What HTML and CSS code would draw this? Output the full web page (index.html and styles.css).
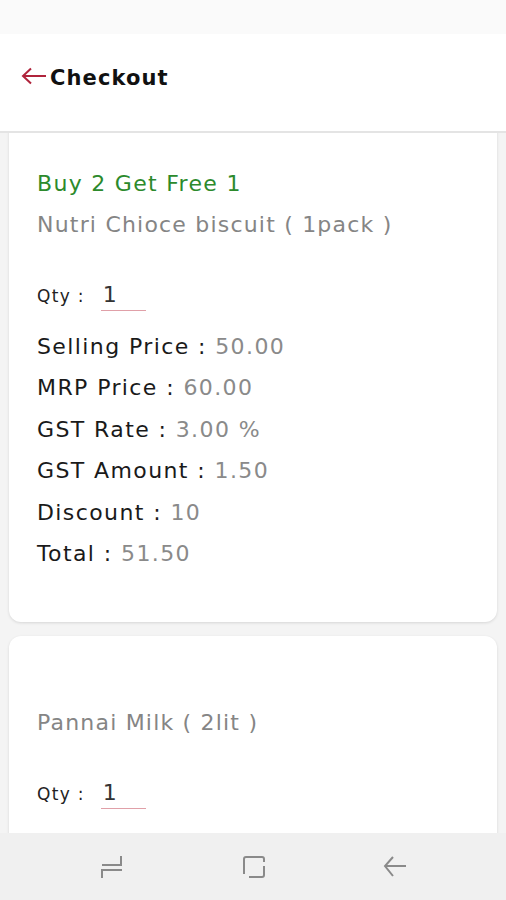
FILE: index.html
```html
<!DOCTYPE html>
<html>
<head>
<meta charset="utf-8">
<link rel="stylesheet" href="styles.css">
</head>
<body>
<div class="phone">
  <div class="statusbar"></div>
  <header class="appbar">
    <svg class="back" width="26" height="18" viewBox="0 0 26 18"><path d="M25 9H2M10 1.5L2 9l8 7.5" fill="none" stroke="#b0243c" stroke-width="2"/></svg>
    <h1 class="title">Checkout</h1>
  </header>
  <main class="content">
    <section class="card card-first">
      <p class="offer">Buy 2 Get Free 1</p>
      <p class="name">Nutri Chioce biscuit ( 1pack )</p>
      <div class="qty"><span class="qty-label">Qty :</span><span class="qty-input">1</span></div>
      <ul class="details">
        <li>Selling Price : <span class="val">50.00</span></li>
        <li>MRP Price : <span class="val">60.00</span></li>
        <li>GST Rate : <span class="val">3.00 %</span></li>
        <li>GST Amount : <span class="val">1.50</span></li>
        <li>Discount : <span class="val">10</span></li>
        <li>Total : <span class="val">51.50</span></li>
      </ul>
    </section>
    <section class="card">
      <p class="offer empty">&nbsp;</p>
      <p class="name">Pannai Milk ( 2lit )</p>
      <div class="qty"><span class="qty-label">Qty :</span><span class="qty-input">1</span></div>
    </section>
  </main>
  <nav class="navbar">
    <svg width="24" height="26" viewBox="0 0 24 26"><path d="M2 24v-8h20M21 2v9H2" fill="none" stroke="#8a8a8a" stroke-width="2"/></svg>
    <svg width="26" height="26" viewBox="0 0 26 26"><path d="M3 20V5a2 2 0 0 1 2-2h16a2 2 0 0 1 2 2v3M23 12v9a2 2 0 0 1-2 2H8" fill="none" stroke="#8a8a8a" stroke-width="2"/></svg>
    <svg width="24" height="26" viewBox="0 0 24 26"><path d="M23 12H3M10 3L2 12l8 10" fill="none" stroke="#8a8a8a" stroke-width="2"/></svg>
  </nav>
</div>
</body>
</html>
```
FILE: styles.css
```css
* { box-sizing: border-box; }
html, body { margin: 0; padding: 0; }
body { font-family: "DejaVu Sans", "Open Sans", sans-serif; background: #f4f4f4; }
.phone { width: 506px; height: 900px; display: flex; flex-direction: column; overflow: hidden; }
.statusbar { height: 34px; background: #fafafa; flex: none; }
.appbar { height: 99px; flex: none; background: #fff; border-bottom: 2px solid #e4e4e4; display: flex; align-items: center; padding: 0 0 10px 21px; position: relative; z-index: 2; }
.back { margin-right: 3px; margin-top: -4px; }
.title { margin: 0; font-size: 21px; font-weight: 700; color: #111; letter-spacing: 1.1px; }
.content { flex: 1; overflow: hidden; background: #f4f4f4; padding: 0 9px; display: flex; flex-direction: column; gap: 14px; }
.card { background: #fff; border-radius: 12px; box-shadow: 0 1px 3px rgba(0,0,0,0.12); padding: 48px 28px 0; flex: none; }
.card-first { margin-top: -14px; height: 503px; }
.card + .card { height: 230px; padding-top: 29px; }
p { margin: 0; }
.offer { font-size: 22px; color: #2c8a2c; line-height: 34px; letter-spacing: 1.3px; }
.name { font-size: 22px; color: #858585; line-height: 48px; letter-spacing: 1.2px; }
.qty { display: flex; align-items: flex-end; margin-top: 22px; height: 40px; }
.qty-label { font-size: 17px; color: #222; margin-right: 16px; padding-bottom: 5px; letter-spacing: 1.3px; }
.qty-input { width: 45px; border-bottom: 1.5px solid #e0a0a8; font-size: 22px; color: #333; line-height: 30px; padding-left: 2px; }
.details { list-style: none; margin: 15px 0 0; padding: 0; }
.details li { font-size: 22px; line-height: 41.4px; color: #1a1a1a; letter-spacing: 1.4px; }
.val { color: #8a8a8a; }
.navbar { height: 67px; flex: none; background: #f0f0f0; display: flex; justify-content: space-between; align-items: center; padding: 0 99px 0 100px; }
.navbar svg { display: block; }
```
